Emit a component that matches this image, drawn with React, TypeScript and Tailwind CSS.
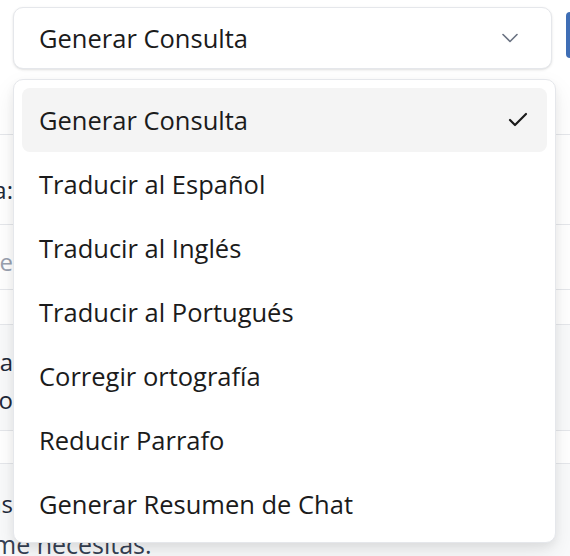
import { ChevronDown, Check } from "lucide-react";

const options = [
  "Generar Consulta",
  "Traducir al Español",
  "Traducir al Inglés",
  "Traducir al Portugués",
  "Corregir ortografía",
  "Reducir Parrafo",
  "Generar Resumen de Chat",
];

// text clipped at the left edge, only its tail shows
const Tail = ({ text, className = "" }: { text: string; className?: string }) => (
  <div className={`flex w-[13px] justify-end overflow-hidden whitespace-nowrap ${className}`}>
    <span className="shrink-0">{text}</span>
  </div>
);

const App = () => {
  const selected = options[0];

  return (
    <div className="relative w-[570px] h-[556px] overflow-hidden bg-white font-['Open_Sans','Noto_Sans',sans-serif] text-[#1b1b1b]">
      {/* Page behind the open select */}
      <div className="flex flex-col">
        <div className="flex h-[135px] border-b border-gray-200">
          <div className="flex items-start pt-[7px] pl-[13px]">
            <button className="flex h-[62px] w-[539px] items-center justify-between rounded-[10px] border border-gray-200 bg-white pl-[25px] pr-[27px] text-[25.5px] shadow-sm">
              <span>{selected}</span>
              <ChevronDown className="h-7 w-7 text-gray-500" strokeWidth={1.4} />
            </button>
          </div>
          <div className="ml-[14px] mt-[12px] h-[46px] w-[20px] rounded-l-md bg-[#3f6eb5]" />
        </div>

        <div className="flex h-[90px] items-center border-b border-gray-200 pt-[20px]">
          <Tail text="Consulta:" className="text-[24px] text-gray-800" />
        </div>

        <div className="flex h-[64px] items-center pt-[10px]">
          <Tail text="Escribe aquí la consulta pre" className="text-[24px] text-gray-400" />
        </div>

        <div className="h-[36px] border-y border-gray-200" />

        <div className="flex h-[105px] flex-col justify-center bg-gray-50 pt-[6px] leading-[38px]">
          <Tail text="Consulta" className="text-[24px] text-gray-800" />
          <Tail text="Párrafo" className="text-[24px] text-gray-800" />
        </div>

        <div className="h-[34px] border-y border-gray-200" />

        <div className="flex flex-1 flex-col bg-gray-50 pt-[20px] leading-[40px]">
          <Tail text="Respuestas" className="text-[24px] text-gray-800" />
          <span className="-ml-[7px] text-[25px] text-gray-700">me necesitas.</span>
        </div>
      </div>

      {/* Open listbox overlay */}
      <div className="absolute left-[13px] top-[79px] w-[543px] rounded-[10px] border border-gray-200 bg-white px-[8px] pt-[8px] pb-[6px] shadow-[0_10px_25px_rgba(0,0,0,0.08),0_4px_8px_rgba(0,0,0,0.06)]">
        {options.map((opt) => (
          <div
            key={opt}
            className={`flex h-[64px] items-center justify-between rounded-lg pl-[17px] pr-[17px] text-[25.5px] ${
              opt === selected ? "bg-[#f4f4f4]" : ""
            }`}
          >
            <span>{opt}</span>
            {opt === selected && <Check className="h-6 w-6" strokeWidth={2.2} />}
          </div>
        ))}
      </div>
    </div>
  );
};

export default App;
